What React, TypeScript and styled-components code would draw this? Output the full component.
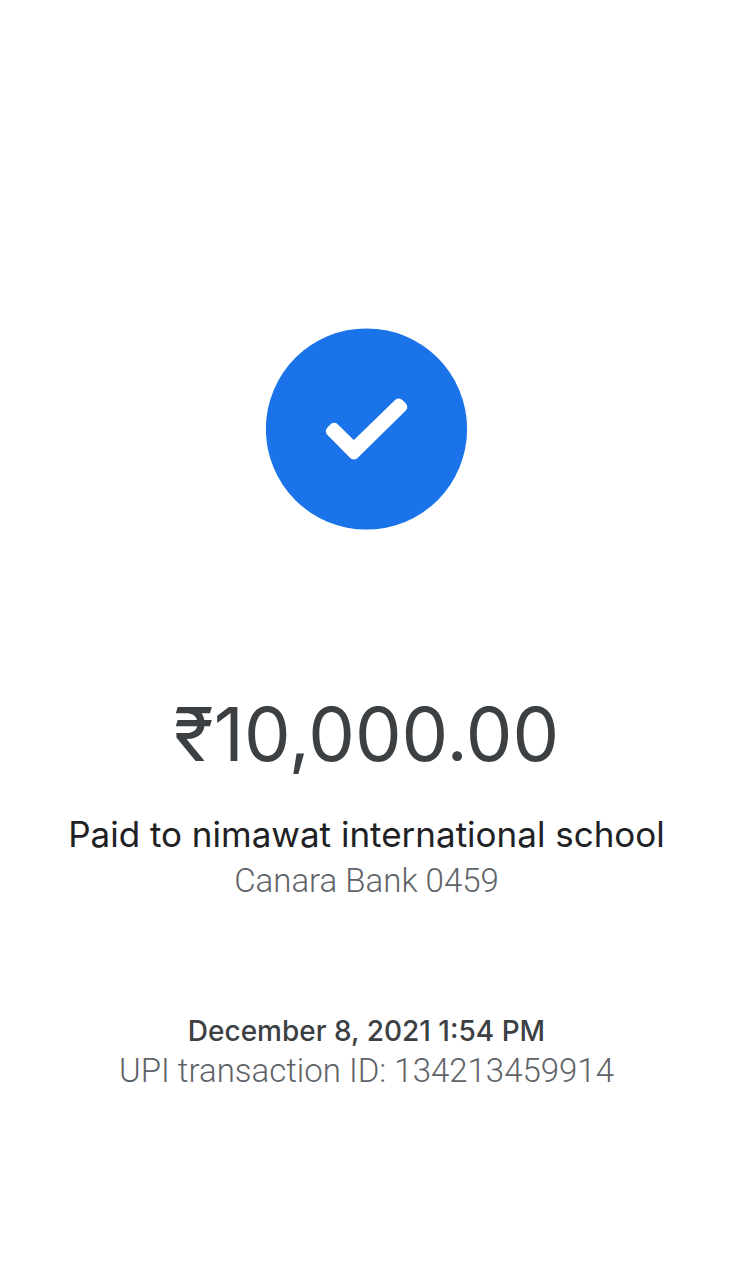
import React from "react";
import styled, { createGlobalStyle } from "styled-components";

const GlobalStyle = createGlobalStyle`
  body {
    margin: 0;
    background: #ffffff;
  }
`;

const Page = styled.main`
  min-height: 100vh;
  box-sizing: border-box;
  padding: 328px 24px 48px;
  display: flex;
  flex-direction: column;
  align-items: center;
  text-align: center;
  background: #ffffff;
`;

const StatusIcon = styled.svg`
  display: block;
  width: 202px;
  height: 202px;
`;

const Amount = styled.h1`
  margin: 160px 0 0;
  font: 400 74px/88px Inter, sans-serif;
  color: #3c4043;
`;

const Payee = styled.p`
  margin: 34px 0 0;
  font: 400 35px/44px Inter, sans-serif;
  color: #202124;
`;

const Detail = styled.p`
  margin: 0;
  font: 300 33px/40px Roboto, sans-serif;
  color: #5f6368;
`;

const Account = styled(Detail)`
  margin-top: 5px;
`;

const Timestamp = styled.time`
  margin-top: 110px;
  font: 500 28px/40px Inter, sans-serif;
  color: #3c4043;
`;

export default function App() {
  return (
    <>
      <GlobalStyle />
      <Page>
        <StatusIcon viewBox="0 0 202 202" role="img" aria-label="Payment successful">
          <circle cx="100.5" cy="101" r="100.6" fill="#1a73e8" />
          <path
            d="M64.8 103.2 L68.2 99.800 L87.800 119.100 L132.800 75.400 L136.300 79 L87.800 126.600 Z"
            fill="#ffffff"
            stroke="#ffffff"
            strokeWidth="10"
            strokeLinejoin="round"
          />
        </StatusIcon>
        <Amount>₹10,000.00</Amount>
        <Payee>Paid to nimawat international school</Payee>
        <Account>Canara Bank 0459</Account>
        <Timestamp dateTime="2021-12-08T13:54">December 8, 2021 1:54 PM</Timestamp>
        <Detail>UPI transaction ID: 134213459914</Detail>
      </Page>
    </>
  );
}
